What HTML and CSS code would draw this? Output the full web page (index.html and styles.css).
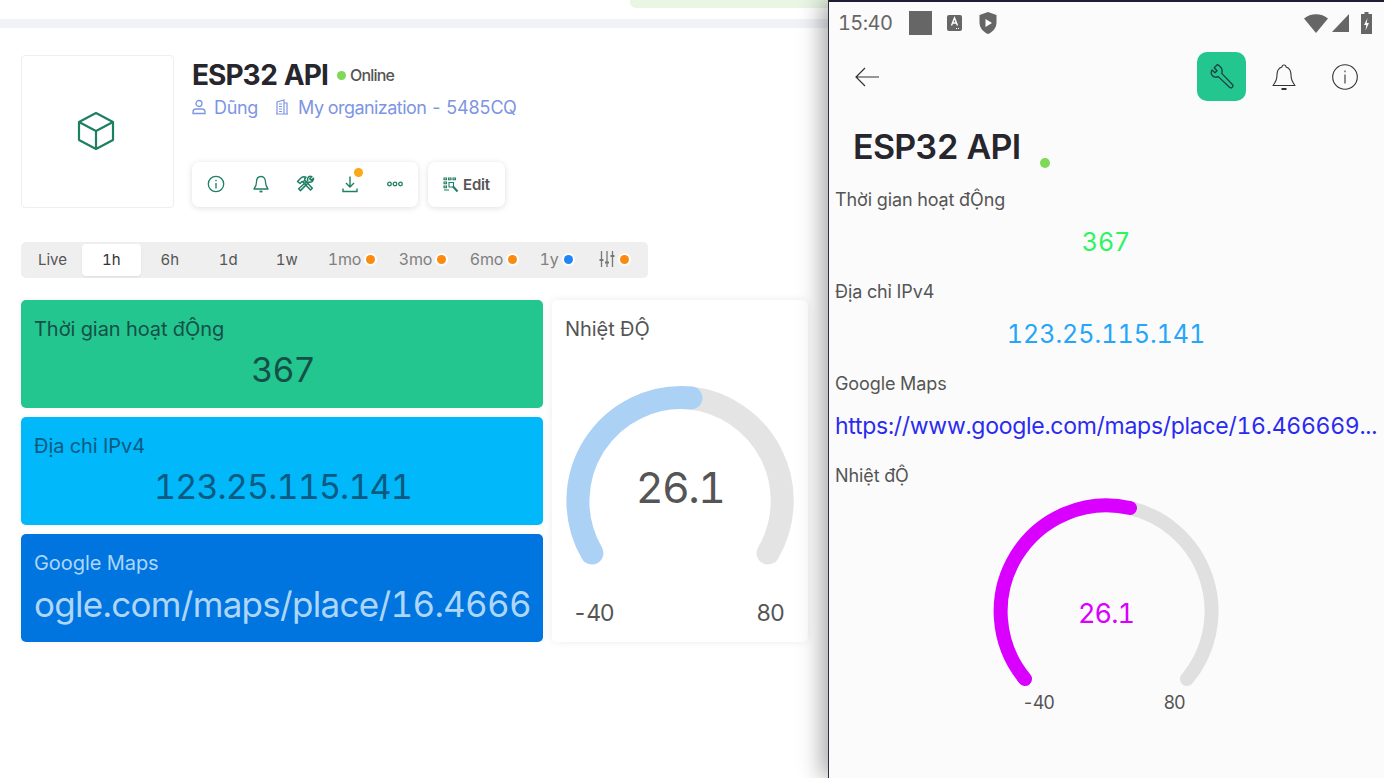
FILE: index.html
```html
<!DOCTYPE html>
<html lang="en">
<head>
  <meta charset="utf-8">
  <title>ESP32 API</title>
  <link rel="stylesheet" href="styles.css">
</head>
<body>
  <main class="dash">
    <div class="topbar"><div class="top-pill"></div></div>
    <div class="band"></div>

    <section class="device">
      <div class="thumb">
        <svg width="40" height="40" viewBox="0 0 40 40" fill="none" stroke="#1f7f63" stroke-width="2.2" stroke-linejoin="round"><path d="M20 2 37 11V29L20 38 3 29V11Z"/><path d="M3 11 20 20 37 11M20 20V38"/></svg>
      </div>
      <div class="info">
        <div class="title-row">
          <h1>ESP32 API</h1>
          <span class="dot"></span>
          <span class="status">Online</span>
        </div>
        <div class="meta">
          <svg class="meta-icon" width="14" height="16" viewBox="0 0 14 16" fill="none" stroke="#7e95e3" stroke-width="1.3"><circle cx="7" cy="4.5" r="3"/><path d="M1 14.5V13c0-2 1.5-3 3-3h6c1.500 0 3 1 3 3v1.500Z"/></svg>
          <span class="owner">Dũng</span>
          <svg class="meta-icon org-icon" width="14" height="16" viewBox="0 0 14 16" fill="none" stroke="#7e95e3" stroke-width="1.200"><path d="M2 15V3l7-2v14M9 4h3v11M1 15h12M4 5h3M4 7.500h3M4 10h3M4 12.500h3"/></svg>
          <span class="org">My organization - 5485CQ</span>
        </div>
        <div class="actions">
          <div class="tool-group">
            <button class="tool"><svg width="18" height="18" viewBox="0 0 18 18" fill="none" stroke="#1f7f63" stroke-width="1.300"><circle cx="9" cy="9" r="7.700"/><path d="M9 8v5.500M9 4.800v1.400"/></svg></button>
            <button class="tool"><svg width="16" height="18" viewBox="0 0 16 18" fill="none" stroke="#1f7f63" stroke-width="1.300" stroke-linejoin="round"><path d="M8 1.500c-3 0-4.500 2.500-4.500 5.500 0 3-1 5-2.500 7h14c-1.500-2-2.500-4-2.500-7 0-3-1.500-5.500-4.500-5.500Z"/><path d="M6.500 16.500h3" stroke-width="1.800"/></svg></button>
            <button class="tool"><svg width="19" height="17" viewBox="0 0 19 17" fill="none" stroke="#1f7f63" stroke-width="1.500" stroke-linejoin="round"><path d="M1.500 6.500 5 3c1.500-1.300 3.500-1.500 5-.8L8.500 4 9 5 7 7 6 6.500 4 8.500Z"/><path d="M7 7l7.500 8 1.800-1.800L9 5.500"/><path d="M17.500 3.200 15.300 5.300 13.700 3.700 15.800 1.600C14 .9 12.500 1.500 11.800 3c-.4 1-.3 1.700 0 2.500L2.700 13.800 4.500 15.600 13 7c1 .4 2 .3 3-.4 1.200-.9 1.700-2 1.500-3.400Z"/></svg></button>
            <button class="tool tool-badge"><svg width="16" height="18" viewBox="0 0 16 18" fill="none" stroke="#1f7f63" stroke-width="1.400"><path d="M8 1.500V12M4 8l4 4 4-4M1 13.500v3h14v-3"/></svg><span class="badge"></span></button>
            <button class="tool"><svg width="16" height="6" viewBox="0 0 16 6" fill="none" stroke="#1f7f63" stroke-width="1.300"><circle cx="2.500" cy="3" r="1.800"/><circle cx="8" cy="3" r="1.800"/><circle cx="13.500" cy="3" r="1.800"/></svg></button>
          </div>
          <button class="edit"><svg width="16" height="16" viewBox="0 0 16 16" fill="none" stroke="#1f7f63" stroke-width="1.100"><path d="M1 1h2.500v1.800H1ZM5.500 1H8v1.800H5.500ZM10 1h2.500v1.800H10ZM1 5h2.500v1.800H1ZM1 9h2.500v1.800H1ZM6 5.500h4.500V10H6ZM1 13h5"/><path d="M10 9.500l4.500 5" stroke-width="2"/></svg>Edit</button>
        </div>
      </div>
    </section>

    <nav class="ranges">
      <span class="range plain">Live</span>
      <span class="range active">1h</span>
      <span class="range">6h</span>
      <span class="range">1d</span>
      <span class="range">1w</span>
      <span class="range muted">1mo<i class="mark"></i></span>
      <span class="range muted">3mo<i class="mark"></i></span>
      <span class="range muted">6mo<i class="mark"></i></span>
      <span class="range muted narrow">1y<i class="mark mark-blue"></i></span>
      <span class="range muted last"><svg width="16" height="18" viewBox="0 0 16 18" fill="none" stroke="#777" stroke-width="1.300"><path d="M2.500 1v16M8 1v16M13.500 1v16"/><path d="M.5 10h4M6 12.500h4M11.500 6h4" stroke-width="2.200"/></svg><i class="mark"></i></span>
    </nav>

    <section class="widgets">
      <div class="stack">
        <div class="tile tile-green">
          <div class="tile-label">Thời gian hoạt đỘng</div>
          <div class="tile-value">367</div>
        </div>
        <div class="tile tile-cyan">
          <div class="tile-label">Địa chỉ IPv4</div>
          <div class="tile-value">123.25.115.141</div>
        </div>
        <div class="tile tile-blue">
          <div class="tile-label">Google Maps</div>
          <div class="tile-value clip">ogle.com/maps/place/16.4666</div>
        </div>
      </div>
      <div class="gauge-card">
        <div class="gauge-title">Nhiệt ĐỘ</div>
        <svg class="gauge" width="256" height="300" viewBox="0 0 256 300" fill="none" stroke-linecap="round">
          <path d="M139 56A103.500 103.500 0 0 1 216.100 211" stroke="#e4e4e4" stroke-width="23"/>
          <path d="M39.900 211A103.500 103.500 0 0 1 139 56" stroke="#abd1f5" stroke-width="23"/>
          <text x="128" y="161" text-anchor="middle" class="gauge-num">26.1</text>
          <text x="41" y="279" text-anchor="middle" class="gauge-end">-40</text>
          <text x="218" y="279" text-anchor="middle" class="gauge-end">80</text>
        </svg>
      </div>
    </section>
  </main>

  <aside class="phone">
    <div class="statusbar">
      <span class="clock">15:40</span>
      <span class="sq"></span>
      <svg class="app-a" width="15" height="16" viewBox="0 0 15 16"><rect width="15" height="16" rx="2" fill="#666"/><path d="M4.500 10.500 7.500 3l3 7.500M5.500 8h4" stroke="#fff" stroke-width="1.400" fill="none"/><path d="M9 13.500h4" stroke="#fff" stroke-dasharray="1 1"/></svg>
      <svg class="shield" width="18" height="22" viewBox="0 0 18 22"><path d="M9 0 17.500 3V10.500C17.500 15.500 14 20 9 22 4 20 .5 15.500 .5 10.500V3Z" fill="#666"/><path d="M6.500 7 13 11 6.500 15Z" fill="#fff"/></svg>
      <span class="spring"></span>
      <svg width="24" height="19" viewBox="0 0 24 19"><path d="M0 4.500C6.500 -1.300 17.500 -1.300 24 4.500L12 19Z" fill="#666"/></svg>
      <svg class="signal" width="17" height="18" viewBox="0 0 17 18"><path d="M17 0V18H0Z" fill="#666"/></svg>
      <svg class="batt" width="11" height="22" viewBox="0 0 11 22"><path d="M3.500 0h4v2H11v20H0V2h3.500Z" fill="#666"/><path d="M6.500 6 3 13H5.300L4.500 18.500 8 11H5.700Z" fill="#fbfbfb"/></svg>
    </div>

    <div class="appbar">
      <svg width="26" height="20" viewBox="0 0 26 20" fill="none" stroke="#333" stroke-width="1.200"><path d="M25 10H2M11 1 2 10l9 9"/></svg>
      <span class="spring"></span>
      <button class="wrench"><svg width="26" height="26" viewBox="0 0 26 26" fill="none" stroke="#1c3f3d" stroke-width="1.300" stroke-linejoin="round"><path d="M8.500 1.500 5.200 4.800 8 7.800 6 9.800 3 7C1.800 9.200 2 11.200 3.500 12.700 5 14.200 7 14.500 9.300 13.600L20.500 24.300C21.300 25 22.300 25 23.200 24.200 24.100 23.300 24.100 22.300 23.400 21.500L12.700 10.400C13.500 8.200 13.200 6 11.700 4.300 10.700 3 9.700 2.200 8.500 1.500Z"/></svg></button>
      <svg class="bar-bell" width="24" height="27" viewBox="0 0 24 27" fill="none" stroke="#333" stroke-width="1.100" stroke-linejoin="round"><path d="M12 1c-1.500 0-2 1-2 2-3.500 1-5 4-5 8 0 4-2 8-4 10.500h22C21 19 19 15 19 11c0-4-1.500-7-5-8 0-1-.5-2-2-2Z"/><path d="M9.500 25h5" stroke-width="2"/></svg>
      <svg width="26" height="26" viewBox="0 0 26 26" fill="none" stroke="#333" stroke-width="1.100"><circle cx="13" cy="13" r="12.300"/><path d="M13 10.500v9M13 6.500v1.800"/></svg>
    </div>

    <div class="phone-title">
      <h2>ESP32 API</h2>
      <span class="dot dot-big"></span>
    </div>

    <div class="field">
      <div class="field-label">Thời gian hoạt đỘng</div>
      <div class="field-value val-green">367</div>
    </div>
    <div class="field">
      <div class="field-label">Địa chỉ IPv4</div>
      <div class="field-value val-blue">123.25.115.141</div>
    </div>
    <div class="field">
      <div class="field-label">Google Maps</div>
      <div class="field-value val-link">https://www.google.com/maps/place/16.466669...</div>
    </div>
    <div class="field-label">Nhiệt đỘ</div>
    <svg class="phone-gauge" width="260" height="240" viewBox="0 0 260 240" fill="none" stroke-linecap="round">
      <path d="M154 10A106 106 0 0 1 211 181" stroke="#e0e0e0" stroke-width="14"/>
      <path d="M49 181A106 106 0 0 1 154 10" stroke="#da00ff" stroke-width="14"/>
      <text x="130" y="125" text-anchor="middle" class="pg-num">26.1</text>
      <text x="62" y="211" text-anchor="middle" class="pg-end">-40</text>
      <text x="198" y="211" text-anchor="middle" class="pg-end">80</text>
    </svg>
  </aside>
</body>
</html>
```

FILE: styles.css
```css
/* --- page --- */
*{box-sizing:border-box}
html,body{height:100%}
body{margin:0;display:flex;height:100vh;overflow:hidden;background:#fff;color:#555;font-family:Inter,"Liberation Sans",sans-serif;font-feature-settings:"tnum"}
button{font-family:inherit;font-feature-settings:inherit;border:none;background:none;padding:0;cursor:pointer}
.spring{flex:1}

/* --- dashboard (left) --- */
.dash{width:828px;flex:none;overflow:hidden}
.topbar{height:19px;display:flex;justify-content:flex-end}
.top-pill{width:198px;height:8px;background:#e9f6e4;border-bottom-left-radius:6px}
.band{height:9px;background:#f1f2f6}

.device{display:flex;gap:18px;padding:27px 21px 0}
.thumb{width:153px;height:153px;border:1px solid #eee;border-radius:4px;display:flex;align-items:center;justify-content:center;padding:0 3px 1px 0}
.title-row{display:flex;align-items:center;height:38px;margin-top:1px}
h1{margin:0;font-size:28px;font-weight:700;letter-spacing:-.9px;color:#26262c}
.dot{width:9px;height:9px;border-radius:50%;background:#7ed957;margin-left:9px}
.status{font-size:16px;letter-spacing:-.8px;margin-left:4px;color:#555;font-weight:500}
.meta{display:flex;align-items:center;font-size:18px;letter-spacing:-.3px;color:#7e95e3;height:26px}
.meta-icon{margin-right:8px}
.org-icon{margin-right:9px}
.owner{margin-right:17px}
.org{letter-spacing:-.55px}

.actions{display:flex;gap:10px;margin-top:42px}
.tool-group{width:226px;height:45px;background:#fff;border-radius:7px;box-shadow:0 1px 6px rgba(0,0,0,.13);display:flex;align-items:center;padding:0 0 2px 2px}
.tool{width:44.700px;height:40px;display:flex;align-items:center;justify-content:center}
.tool-badge{position:relative}
.badge{position:absolute;top:4px;left:26px;width:9px;height:9px;border-radius:50%;background:#faa918}
.edit{width:77px;height:45px;background:#fff;border-radius:7px;box-shadow:0 1px 6px rgba(0,0,0,.13);display:flex;align-items:center;justify-content:center;gap:4px;font-size:15px;font-weight:600;letter-spacing:-.2px;color:#555}

/* --- time range bar --- */
.ranges{display:flex;align-items:center;width:627px;height:36px;margin:34px 0 0 21px;padding:0 2px;background:#efefef;border-radius:5px;font-size:15px;color:#555;line-height:1}
.range{display:flex;align-items:center;justify-content:center;width:58.500px;height:32px;flex:none;padding-bottom:2px}
.plain{width:59px}
.active{background:#fff;border-radius:4px;box-shadow:0 1px 2px rgba(0,0,0,.08);color:#333}
.muted{width:71px;color:#808080;font-size:16px;letter-spacing:-.1px}
.narrow{width:54px}
.last{width:61px}
.mark{width:9px;height:9px;border-radius:50%;background:#fb8a0f;margin-left:5px;box-shadow:0 0 0 2px #fff}
.mark-blue{background:#1f87f5}

/* --- widgets --- */
.widgets{display:flex;gap:9px;margin:22px 0 0 21px}
.stack{width:522px;display:flex;flex-direction:column;gap:9px}
.tile{height:108px;border-radius:5px;padding:16px 11px 0 13px;overflow:hidden;box-shadow:0 0 6px rgba(0,0,0,.05)}
.tile-label{font-size:20px;letter-spacing:-.05px;line-height:26px}
.tile-value{font-size:34px;line-height:42px;text-align:center;margin-top:7px;white-space:nowrap;letter-spacing:-.85px}
.clip{overflow:hidden;text-align:left;font-size:35px;letter-spacing:-.7px}
.tile-green{background:#23c68f;color:#154f48}
.tile-cyan{background:#00b8fa;color:#0c5a82}
.tile-blue{background:#0075e0;color:#aed6f8}
.gauge-card{width:256px;height:342px;border-radius:5px;background:#fff;box-shadow:0 0 8px rgba(0,0,0,.08)}
.gauge-title{font-size:20px;line-height:26px;padding:16px 0 0 13px;letter-spacing:-.05px}
.gauge{display:block}
.gauge-num{font-size:43px;fill:#555;font-family:Inter,sans-serif;font-feature-settings:"tnum";letter-spacing:-1.700px}
.gauge-end{font-size:23px;fill:#555;font-family:Inter,sans-serif;font-feature-settings:"tnum";letter-spacing:-1.200px}

/* --- phone window (right) --- */
.phone{flex:1;background:#fbfbfb;border-top:2px solid #1d1d33;border-left:1px solid #2e2e40;box-shadow:-6px 0 22px rgba(0,0,0,.35);padding:0 7px 0 6px;overflow:hidden}
.statusbar{display:flex;align-items:center;height:42px;padding:0 5px 0 3px;color:#666}
.clock{font-size:20px;margin-right:17px;letter-spacing:-.6px}
.sq{width:23px;height:24px;background:#666}
.app-a{margin-left:15px}
.shield{margin-left:17px}
.signal{margin-left:4px}
.batt{margin-left:12px}
.appbar{display:flex;align-items:center;height:50px;margin-top:8px;padding:0 19px 0 19px}
.wrench{width:49px;height:49px;margin-bottom:2px;background:#23c68f;border-radius:10px;display:flex;align-items:center;justify-content:center}
.bar-bell{margin:0 36px 0 26px}
.phone-title{display:flex;align-items:flex-end;margin:23px 0 0 18px;height:44px}
h2{margin:0;font-size:34px;font-weight:600;letter-spacing:-.7px;color:#26262c;line-height:44px}
.dot-big{width:10px;height:10px;margin:0 0 1px 19px}
.field{height:92px}
.field-label{font-size:18px;line-height:24px;color:#555;letter-spacing:-.1px}
.phone-title + .field{margin-top:19px}
.field-value{font-size:25px;line-height:36px;text-align:center;margin-top:12px;white-space:nowrap}
.val-green{color:#2cf562}
.val-blue{color:#25a6fa}
.val-link{color:#2b2bf0;text-align:left;font-size:23px;letter-spacing:-.28px}
.phone-gauge{display:block;margin:10px 0 0 141px}
.pg-num{font-size:27px;fill:#da00ff;font-family:Inter,sans-serif;font-feature-settings:"tnum";letter-spacing:-1px}
.pg-end{font-size:18px;fill:#555;font-family:Inter,sans-serif;font-feature-settings:"tnum";letter-spacing:-1.200px}
```
